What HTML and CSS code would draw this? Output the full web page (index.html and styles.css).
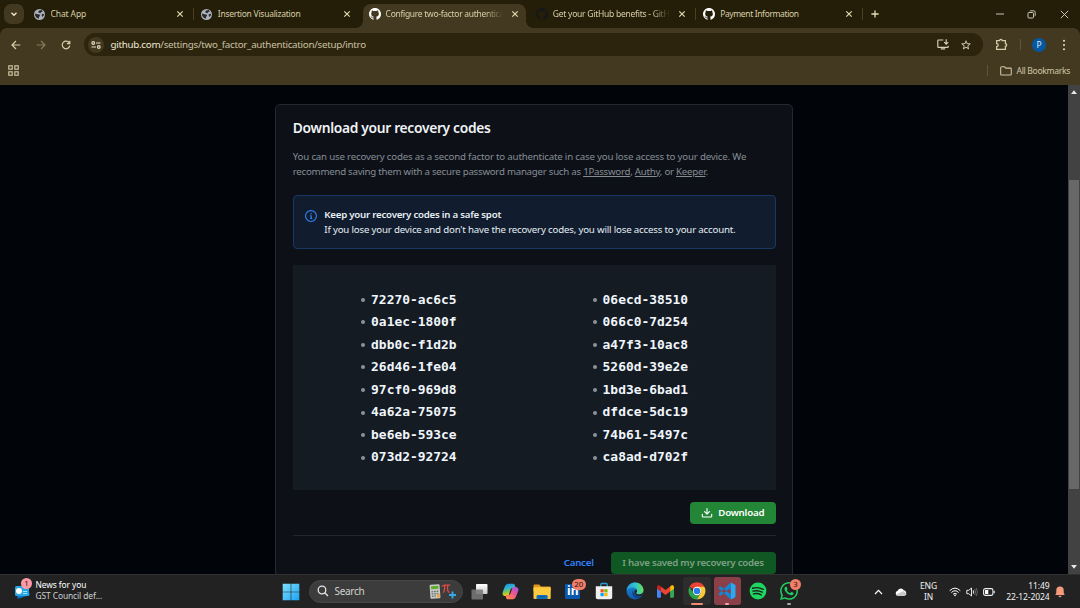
FILE: index.html
```html
<!DOCTYPE html>
<html lang="en">
<head>
<meta charset="utf-8">
<title>Configure two-factor authentication</title>
<link rel="stylesheet" href="styles.css">
</head>
<body>
<svg class="defs" width="0" height="0" aria-hidden="true">
  <defs>
    <symbol id="x" viewBox="0 0 8 8"><path d="M1.3 1.3l5.4 5.4M6.7 1.3L1.3 6.7" fill="none" stroke="currentColor" stroke-width="1.15"/></symbol>
    <symbol id="globe" viewBox="2 2 20 20"><circle cx="12" cy="12" r="10" fill="#a9b1be"/><path fill="#2b2a26" d="M4 10L8.500 11.500l3.500.5 1 2-1.500 2-1 3.500Q5.500 18.500 4 14zM11.500 4.500L16 4l2 3-3 .5-1 2-3-.5-1.500-2zM16 11.500l4-1v3l-2.500 3-1.500-2.500z"/></symbol>
    <symbol id="github" viewBox="0 0 16 16"><path fill="currentColor" d="M8 0C3.58 0 0 3.58 0 8c0 3.54 2.29 6.53 5.47 7.59.4.07.55-.17.55-.38 0-.19-.01-.82-.01-1.49-2.01.37-2.53-.49-2.69-.94-.09-.23-.48-.94-.82-1.13-.28-.15-.68-.52-.01-.53.63-.01 1.08.58 1.23.82.72 1.21 1.87.87 2.33.66.07-.52.28-.87.51-1.07-1.78-.2-3.64-.89-3.64-3.95 0-.87.31-1.59.82-2.15-.08-.2-.36-1.02.08-2.12 0 0 .67-.21 2.2.82.64-.18 1.32-.27 2-.27s1.36.09 2 .27c1.53-1.04 2.2-.82 2.2-.82.44 1.1.16 1.92.08 2.12.51.56.82 1.27.82 2.15 0 3.07-1.87 3.75-3.65 3.95.29.25.54.73.54 1.48 0 1.07-.01 1.93-.01 2.2 0 .21.15.46.55.38A8.01 8.01 0 0 0 16 8c0-4.42-3.58-8-8-8z"/></symbol>
  </defs>
</svg>

<div class="screen">
  <header class="chrome">
    <div class="tabstrip">
      <div class="tab-search"><svg width="8" height="8" viewBox="0 0 8 8"><path d="M1.500 2.700L4 5.200l2.500-2.500" fill="none" stroke="currentColor" stroke-width="1.400"/></svg></div>
      <div class="tabs">
        <div class="tab"><svg class="fav"><use href="#globe"/></svg><span class="tab-title t1">Chat App</span><svg class="close"><use href="#x"/></svg></div>
        <i class="sep"></i>
        <div class="tab"><svg class="fav"><use href="#globe"/></svg><span class="tab-title t2">Insertion Visualization</span><svg class="close"><use href="#x"/></svg></div>
        <i class="sep off"></i>
        <div class="tab active"><svg class="fav gh"><use href="#github"/></svg><span class="tab-title t3 fade">Configure two-factor authentication</span><svg class="close"><use href="#x"/></svg></div>
        <i class="sep off"></i>
        <div class="tab"><svg class="fav gh dark"><use href="#github"/></svg><span class="tab-title t4 fade">Get your GitHub benefits - GitHub</span><svg class="close"><use href="#x"/></svg></div>
        <i class="sep"></i>
        <div class="tab"><svg class="fav gh"><use href="#github"/></svg><span class="tab-title t5">Payment Information</span><svg class="close"><use href="#x"/></svg></div>
        <i class="sep"></i>
      </div>
      <svg class="new-tab" viewBox="0 0 8 8"><path d="M4 .4v7.200M.4 4h7.200" stroke="currentColor" stroke-width="1.300"/></svg>
      <div class="win">
        <svg width="8" height="8" viewBox="0 0 8 8"><path d="M0 4h8" stroke="currentColor" stroke-width=".9"/></svg>
        <svg width="9" height="9" viewBox="0 0 9 9" fill="none" stroke="currentColor" stroke-width=".9"><rect x="1" y="2.500" width="5.500" height="5.500" rx="1"/><path d="M2.800 1.200q.3-.4 1-.4H6.600Q8.200.8 8.200 2.400V5.200q0 .7-.4 1"/></svg>
        <svg width="9" height="9" viewBox="0 0 9 9"><path d="M.8.8l7.400 7.400M8.200.8L.8 8.200" stroke="currentColor" stroke-width=".9"/></svg>
      </div>
    </div>
    <div class="toolbar">
      <div class="nav">
        <svg width="10" height="10" viewBox="0 0 10 10"><path d="M9.300 5H1.300M5 1L1 5l4 4" fill="none" stroke="currentColor" stroke-width="1.200"/></svg>
        <svg class="dim" width="10" height="10" viewBox="0 0 10 10"><path d="M.7 5h8M5 1l4 4-4 4" fill="none" stroke="currentColor" stroke-width="1.200"/></svg>
        <svg width="10" height="10" viewBox="0 0 10 10"><path d="M8.300 3A3.800 3.800 0 1 0 8.800 5.700M8.800.8v2.900H5.900" fill="none" stroke="currentColor" stroke-width="1.200"/></svg>
      </div>
      <div class="omnibox">
        <div class="site"><svg width="10" height="8" viewBox="0 0 10 8" fill="none" stroke="currentColor" stroke-width="1.200"><circle cx="2.200" cy="2" r="1.300"/><path d="M5 2h4.500M.5 6H5"/><circle cx="7.800" cy="6" r="1.300"/></svg></div>
        <div class="url"><b>github.com</b>/settings/two_factor_authentication/setup/intro</div>
        <svg class="install" width="12" height="11" viewBox="0 0 12 11" fill="none" stroke="currentColor" stroke-width="1.150"><path d="M6.300 1H1.500Q.8 1 .8 1.700v6q0 .7.7.7h9q.7 0 .7-.7V6.800M3.800 9.800h4.400M9.200.3v4.600M7.200 3.200l2 2 2-2"/></svg>
        <svg class="star" width="11" height="11" viewBox="0 0 24 24"><path fill="currentColor" d="M22 9.240l-7.190-.62L12 2 9.190 8.630 2 9.240l5.460 4.730L5.820 21 12 17.270 18.180 21l-1.630-7.030L22 9.240zM12 15.400l-3.760 2.270 1-4.280-3.320-2.880 4.380-.38L12 6.100l1.710 4.040 4.380.38-3.320 2.880 1 4.280L12 15.400z"/></svg>
      </div>
      <svg class="puzzle" width="13" height="13" viewBox="0 0 13 13" fill="none" stroke="currentColor" stroke-width="1.250"><path d="M1.600 2.600h3a1.300 1.300 0 0 1 2.600 0h3.200v3a1.300 1.300 0 0 1 0 2.600v3.200H1.600V8.700a1.600 1.600 0 0 0 0-3.200z"/></svg>
      <i class="bar-sep"></i>
      <div class="avatar">P</div>
      <svg class="dots" width="4" height="12" viewBox="0 0 4 12"><g fill="currentColor"><circle cx="2" cy="1.800" r="1.050"/><circle cx="2" cy="6" r="1.050"/><circle cx="2" cy="10.200" r="1.050"/></g></svg>
    </div>
    <div class="bookmarks">
      <svg width="11" height="11" viewBox="0 0 11 11" fill="none" stroke="currentColor" stroke-width="1.150"><rect x=".8" y=".8" width="3.400" height="3.400"/><rect x="6.800" y=".8" width="3.400" height="3.400"/><rect x=".8" y="6.800" width="3.400" height="3.400"/><rect x="6.800" y="6.800" width="3.400" height="3.400"/></svg>
      <i class="bar-sep push"></i>
      <svg class="folder" width="12" height="10" viewBox="0 0 12 10" fill="none" stroke="currentColor" stroke-width="1.050"><path d="M.7 8.200V1.600q0-.8.8-.8h3l1.200 1.300h4.800q.8 0 .8.8v5.300q0 .8-.8.8h-9q-.8 0-.8-.8z"/></svg>
      <span class="all-bm">All Bookmarks</span>
    </div>
  </header>

  <div class="viewport">
    <main class="page">
      <section class="card">
        <h1>Download your recovery codes</h1>
        <p class="lead"><span class="l1">You can use recovery codes as a second factor to authenticate in case you lose access to your device. We</span><br><span class="l2">recommend saving them with a secure password manager such as <a>1Password</a>, <a>Authy</a>, or <a>Keeper</a>.</span></p>
        <div class="flash">
          <svg width="12" height="12" viewBox="0 0 16 16" fill="#3184f4"><path d="M0 8a8 8 0 1 1 16 0A8 8 0 0 1 0 8Zm8-6.500a6.500 6.500 0 1 0 0 13 6.500 6.500 0 0 0 0-13ZM6.500 7.750A.75.75 0 0 1 7.250 7h1a.75.75 0 0 1 .75.75v2.750h.25a.75.75 0 0 1 0 1.500h-2a.75.75 0 0 1 0-1.500h.25v-2h-.25a.75.75 0 0 1-.75-.75ZM8 6a1 1 0 1 1 0-2 1 1 0 0 1 0 2Z"/></svg>
          <div><strong>Keep your recovery codes in a safe spot</strong><p>If you lose your device and don't have the recovery codes, you will lose access to your account.</p></div>
        </div>
        <div class="codes">
          <ul>
            <li>72270-ac6c5</li><li>0a1ec-1800f</li><li>dbb0c-f1d2b</li><li>26d46-1fe04</li><li>97cf0-969d8</li><li>4a62a-75075</li><li>be6eb-593ce</li><li>073d2-92724</li>
          </ul>
          <ul>
            <li>06ecd-38510</li><li>066c0-7d254</li><li>a47f3-10ac8</li><li>5260d-39e2e</li><li>1bd3e-6bad1</li><li>dfdce-5dc19</li><li>74b61-5497c</li><li>ca8ad-d702f</li>
          </ul>
        </div>
        <div class="download-row">
          <button class="btn primary"><svg width="12" height="12" viewBox="0 0 16 16" fill="currentColor"><path d="M2.750 14A1.750 1.750 0 0 1 1 12.250v-2.500a.75.75 0 0 1 1.500 0v2.500c0 .138.112.25.25.25h10.500a.25.25 0 0 0 .25-.25v-2.500a.75.75 0 0 1 1.500 0v2.500A1.750 1.750 0 0 1 13.250 14Z"/><path d="M7.250 7.689V2a.75.75 0 0 1 1.500 0v5.689l1.970-1.969a.749.749 0 1 1 1.060 1.060l-3.250 3.250a.749.749 0 0 1-1.060 0L4.220 6.780a.749.749 0 1 1 1.060-1.060l1.970 1.969Z"/></svg><span>Download</span></button>
        </div>
        <div class="footer">
          <button class="btn link">Cancel</button>
          <button class="btn disabled"><span>I have saved my recovery codes</span></button>
        </div>
      </section>
    </main>
    <div class="scrollbar">
      <svg width="8" height="6" viewBox="0 0 8 6"><path d="M1 5l3-3.800L7 5z" fill="#e8e8e8"/></svg>
      <i class="thumb"></i>
      <svg width="8" height="6" viewBox="0 0 8 6"><path d="M1 1l3 3.800L7 1z" fill="#e8e8e8"/></svg>
    </div>
  </div>

  <footer class="taskbar">
    <div class="widget">
      <div class="news-icon">
        <svg width="17" height="17" viewBox="0 0 17 17"><path d="M2 6l11-2 3 9-11 3.500H3.500z" fill="#0d6fc0"/><rect x="1" y="4" width="14" height="10" rx="1.500" fill="#2aa5e4"/><path d="M9 9h4v1H9zM9 11h4v1H9z" fill="#9be7ff"/><circle cx="5" cy="9" r="3" fill="#fff"/></svg>
        <span class="badge news-badge">1</span>
      </div>
      <div class="news-text"><span class="n1">News for you</span><span class="n2">GST Council def...</span></div>
    </div>
    <div class="start">
      <svg width="18" height="18" viewBox="0 0 18 18"><defs><linearGradient id="win" x2="1" y2="1" gradientUnits="objectBoundingBox"><stop stop-color="#7fe0ff"/><stop offset="1" stop-color="#1ba2f2"/></linearGradient></defs><path fill="url(#win)" d="M.7.7h8v8h-8zM9.300.7h8v8h-8zM.7 9.300h8v8h-8zM9.300 9.300h8v8h-8z"/></svg>
    </div>
    <div class="search">
      <svg width="12" height="12" viewBox="0 0 12 12" fill="none" stroke="#e6e6e6" stroke-width="1.300"><circle cx="5" cy="5" r="3.800"/><path d="M7.800 7.800l3.200 3.200"/></svg>
      <span>Search</span>
      <svg class="doodle" width="28" height="17" viewBox="0 0 28 17"><g transform="rotate(-4 6 8)"><rect x="1" y="1.500" width="10" height="14" rx="1" fill="#c7ccc7"/><rect x="2.300" y="3" width="7.400" height="3" fill="#5fae2b"/><path d="M2.500 8.500h7M2.500 10.800h7M2.500 13.100h4" stroke="#6c7471" stroke-width="1.400" stroke-dasharray="1.700 .8"/><rect x="7.800" y="11" width="2.600" height="3.600" fill="#f2a03a"/></g><path d="M13 3.600q1-1.400 2.300-1.400h6M15.700 2.500q.2 5-1.400 7.200M18.700 2.500q-.7 6.400 1.800 7" fill="none" stroke="#dc4a45" stroke-width="1.300"/><path d="M23.500 8.500v7M20 12h7" stroke="#35a9e8" stroke-width="1.900"/></svg>
    </div>
    <div class="apps">
      <div class="app"><svg width="17" height="17" viewBox="0 0 17 17"><defs><linearGradient id="tv" x2="0" y2="1"><stop stop-color="#fff"/><stop offset="1" stop-color="#c9c9c9"/></linearGradient></defs><rect x="5" y="1" width="11.500" height="10" rx=".8" fill="url(#tv)"/><rect x=".5" y="6.500" width="11.500" height="10" rx=".8" fill="#777" fill-opacity=".88"/></svg></div>
      <div class="app"><svg width="17" height="17" viewBox="0 0 24 24"><defs><linearGradient id="c1" x2=".3" y2="1"><stop stop-color="#1589e9"/><stop offset=".45" stop-color="#30b6cb"/><stop offset=".75" stop-color="#95c93d"/><stop offset="1" stop-color="#ffcb1f"/></linearGradient><linearGradient id="c2" x1="1" x2=".2" y2="1"><stop stop-color="#8e5cf5"/><stop offset=".5" stop-color="#ec5590"/><stop offset="1" stop-color="#ff8a45"/></linearGradient></defs><path d="M16 1H8.500C4.500 1 3.500 7 1.500 11.500-.4 16 1.500 18.500 5 18.500h2.500c2 0 2.400-2.500 3.300-5.500 1-3.500 1.500-6 4.200-6h4C18.500 3.500 18 1 16 1z" fill="url(#c1)"/><path d="M8 23h7.500c4 0 5-6 7-10.500C24.400 8 22.500 5.500 19 5.500h-2.500c-2 0-2.400 2.500-3.300 5.500-1 3.500-1.500 6-4.200 6H5c.5 3.500 1 6 3 6z" fill="url(#c2)"/></svg></div>
      <div class="app"><svg width="18" height="17" viewBox="0 0 18 17"><path d="M.5 2.500q0-1 1-1h4.700l1.800 2h9q.7 0 .7.8V8H.5z" fill="#e0951d"/><rect x=".5" y="4.300" width="17.200" height="11.700" rx=".9" fill="#fccb3e"/><path d="M3.500 16v-2.600q0-1.400 1.400-1.400h8.400q1.400 0 1.400 1.400V16z" fill="#1471bd"/><path d="M5.800 13.800h6.600" stroke="#0b4f91"/></svg></div>
      <div class="app"><span class="linkedin">in</span><span class="badge b20">20</span></div>
      <div class="app"><svg width="18" height="18" viewBox="0 0 18 18"><path d="M5.800 5V2.500q0-1 1-1h4.400q1 0 1 1V5" fill="none" stroke="#2a9ed8" stroke-width="1.300"/><path d="M.8 4.300h16.400v11q0 2-2 2H2.800q-2 0-2-2z" fill="#f0f0f0"/><path d="M5.500 7.200h3.200v3.200H5.500z" fill="#f25022"/><path d="M9.300 7.200h3.200v3.200H9.300z" fill="#7fba00"/><path d="M5.500 11h3.200v3.200H5.500z" fill="#00a4ef"/><path d="M9.300 11h3.200v3.200H9.300z" fill="#ffb900"/></svg></div>
      <div class="app"><svg width="18" height="18" viewBox="0 0 24 24"><defs><linearGradient id="e1" x2="1" y2="0"><stop stop-color="#2299e4"/><stop offset=".5" stop-color="#32c4cf"/><stop offset="1" stop-color="#66e053"/></linearGradient><linearGradient id="e2" x2="0" y2="1"><stop stop-color="#1b8ddb"/><stop offset="1" stop-color="#1259ad"/></linearGradient></defs><circle cx="12" cy="12" r="11.300" fill="url(#e2)"/><path d="M.9 11C1.700 5 6.300.7 12 .7c6.500 0 11.300 4.800 11.300 10 0 3.700-2.600 5.800-5.800 5.800-2.700 0-4-1-4-2 0-.8 1.200-1.200 1.200-3C14.700 9 12.500 7.300 9.500 7.300c-4 0-7.400 2.200-8.600 3.700z" fill="url(#e1)"/><path d="M9.300 10.500c-2.500 4.500.5 10.500 6 11.200 2.500 0 4.700-1.200 6-2.900-3 1-6.300.7-8.700-1.300-2.200-1.900-3.300-4-3.300-7z" fill="#0d3f86"/><path d="M14.700 11.500c0 1.800-1.200 2.200-1.200 3 0 1 1.300 2 4 2 2 0 4-1 5-2.500-.2 1.500-.6 2.900-1.300 4-3 1.300-6.200.8-8.400-1-2-1.700-2.300-4.300-.8-6 1-1 2.300-.8 2.700.5z" fill="#242424"/></svg></div>
      <div class="app"><svg width="17" height="13" viewBox="0 0 24 18"><path d="M0 2.500V16q0 1.700 1.700 1.700h3.800V6.500z" fill="#4285f4"/><path d="M24 2.500V16q0 1.700-1.700 1.700h-3.800V6.500z" fill="#34a853"/><path d="M0 2.500V5l5.500 4V2L3.800.7C2.300-.4 0 .6 0 2.500z" fill="#c5221f"/><path d="M24 2.500V5l-5.500 4V2L20.200.7C21.700-.4 24 .6 24 2.500z" fill="#fbbc04"/><path d="M5.500 2v7l6.500 5 6.500-5V2L12 7z" fill="#ea4335"/></svg></div>
      <div class="app boxed"><svg width="18" height="18" viewBox="0 0 24 24"><path d="M12 12L2.200 6.300A11.300 11.300 0 0 1 21.800 6.300z" fill="#ea4335"/><path d="M12 .7A11.300 11.300 0 0 1 21.800 6.400H12L2.200 6.300A11.300 11.300 0 0 1 12 .7z" fill="#ea4335"/><path d="M2.200 6.300A11.300 11.300 0 0 0 12 23.300L16.900 14.800 12 17.600 7.100 14.800z" fill="#2ba24c"/><path d="M21.800 6.400A11.300 11.300 0 0 1 12 23.300L16.900 14.800 17.600 12 12 6.400z" fill="#fcc934"/><circle cx="12" cy="12" r="5.600" fill="#fff"/><circle cx="12" cy="12" r="4.400" fill="#2a7de9"/></svg><i class="run wide"></i></div>
      <div class="app boxed red"><svg width="18" height="18" viewBox="0 0 24 24"><path d="M17 .8l5.600 2.700q.7.400.7 1.200v14.600q0 .8-.7 1.200L17 23.200z" fill="#29a9f1"/><path d="M17 .8L1 15.400q-.5.600 0 1.200l1.600 1.400q.6.400 1.200 0L17 7.500zM17 23.200L1 8.600Q.5 8 1 7.400L2.600 6q.6-.4 1.200 0L17 16.500z" fill="#1189d6"/></svg><i class="run pink"></i></div>
      <div class="app"><svg width="18" height="18" viewBox="0 0 24 24"><circle cx="12" cy="12" r="11.200" fill="#1ed760"/><path d="M4.700 8.300q7.500-2.100 14.300 1.500M5.300 12.200q6.700-1.800 12.300 1.400M6 15.900q5.400-1.500 10.200 1.300" fill="none" stroke="#202020" stroke-width="1.900" stroke-linecap="round"/></svg></div>
      <div class="app"><svg width="18" height="18" viewBox="0 0 24 24"><path fill="#22d063" d="M17.472 14.382c-.297-.149-1.758-.867-2.030-.967-.273-.099-.471-.148-.67.15-.197.297-.767.966-.94 1.164-.173.199-.347.223-.644.075-.297-.15-1.255-.463-2.390-1.475-.883-.788-1.480-1.761-1.653-2.059-.173-.297-.018-.458.13-.606.134-.133.298-.347.446-.52.149-.174.198-.298.298-.497.099-.198.05-.371-.025-.52-.075-.149-.669-1.612-.916-2.207-.242-.579-.487-.5-.669-.51-.173-.008-.371-.01-.57-.01-.198 0-.52.074-.792.372-.272.297-1.040 1.016-1.040 2.479 0 1.462 1.065 2.875 1.213 3.074.149.198 2.096 3.200 5.077 4.487.709.306 1.262.489 1.694.625.712.227 1.360.195 1.871.118.571-.085 1.758-.719 2.006-1.413.248-.694.248-1.289.173-1.413-.074-.124-.272-.198-.57-.347m-5.421 7.403h-.004a9.870 9.870 0 01-5.031-1.378l-.361-.214-3.741.982.998-3.648-.235-.374a9.860 9.860 0 01-1.510-5.260c.001-5.450 4.436-9.884 9.888-9.884 2.640 0 5.122 1.030 6.988 2.898a9.825 9.825 0 012.893 6.994c-.003 5.450-4.437 9.884-9.885 9.884m8.413-18.297A11.815 11.815 0 0012.050 0C5.495 0 .16 5.335.157 11.892c0 2.096.547 4.142 1.588 5.945L.057 24l6.305-1.654a11.882 11.882 0 005.683 1.448h.005c6.554 0 11.890-5.335 11.893-11.893a11.821 11.821 0 00-3.480-8.413Z"/></svg><span class="badge b3">3</span><i class="run"></i></div>
    </div>
    <div class="tray">
      <svg class="chev" width="9" height="6" viewBox="0 0 9 6"><path d="M1 5l3.500-3.600L8 5" fill="none" stroke="#fff" stroke-width="1.200"/></svg>
      <svg class="cloud" width="12" height="8" viewBox="0 0 12 8"><path d="M3 7.800a2.600 2.600 0 0 1-.4-5.100A3.400 3.400 0 0 1 8.800 2.200 2.900 2.900 0 0 1 9.300 7.800z" fill="#fff"/><path d="M1 6.500L8.500 3 11.700 6Q11 7.800 9.300 7.800H3Q1.500 7.800 1 6.500z" fill="#c9c9c9"/></svg>
      <div class="lang"><span>ENG</span><span>IN</span></div>
      <svg class="wifi" width="12" height="10" viewBox="0 0 12 10" fill="none" stroke="#fff" stroke-width="1"><path d="M.7 3.700Q6-1.500 11.300 3.700M2.400 5.500Q6 2 9.600 5.500M4.100 7.200Q6 5.500 7.900 7.200"/><circle cx="6" cy="8.400" r=".8" fill="#fff" stroke="none"/></svg>
      <svg class="vol" width="12" height="10" viewBox="0 0 12 10" fill="none" stroke="#eee"><path d="M.8 3.300h2L5.500 1v8L2.800 6.700h-2zM7.200 3.400q1 1.600 0 3.200"/><path d="M8.600 2q2 3 0 6M10.200 1q2.400 4 0 8" stroke="#777" stroke-width=".8"/></svg>
      <svg class="batt" width="12" height="8" viewBox="0 0 12 8"><rect x=".6" y=".6" width="9.300" height="6.800" rx="1.600" fill="none" stroke="#eee" stroke-width="1.100"/><rect x="2" y="2" width="3.300" height="4" fill="#fff"/><path d="M11.200 2.700v2.600" stroke="#eee" stroke-width="1.100"/></svg>
      <div class="clock"><span class="time">11:49</span><span class="date">22-12-2024</span></div>
      <svg class="bell" width="10" height="12" viewBox="0 0 10 12"><path d="M5 .5a3.700 3.700 0 0 1 3.700 3.700v2.600l1 2.200H.3l1-2.200V4.200A3.700 3.700 0 0 1 5 .5zM3.500 9.800h3a1.500 1.500 0 0 1-3 0z" fill="#f59a7c"/></svg>
    </div>
  </footer>
</div>
</body>
</html>
```
FILE: styles.css
```css
* { box-sizing: border-box; }
body { margin: 0; font-family: "Noto Sans", "Open Sans", sans-serif; background: #010409; }
svg { display: block; flex: none; }
.defs { position: absolute; }
.screen { width: 1080px; height: 608px; display: flex; flex-direction: column; overflow: hidden; }

/* Browser chrome */
.chrome { height: 85px; flex: none; background: #241d08; color: #d9cfa8; display: flex; flex-direction: column; }
.tabstrip { height: 28px; display: flex; align-items: stretch; }
.tab-search { width: 20px; height: 20px; margin: 4px 4px 0; border-radius: 7px; background: #423920; color: #efe8cc; display: flex; align-items: center; justify-content: center; }
.tabs { display: flex; }
.tab { width: 163.5px; display: flex; align-items: center; padding: 0 7.500px 0 6px; font-size: 8.500px; position: relative; }
.tab.active { background: #423920; margin-top: 4px; padding-bottom: 4px; border-radius: 8px 8px 0 0; }
.tab.active::before, .tab.active::after { content: ""; position: absolute; bottom: 0; width: 7px; height: 7px; }
.tab.active::before { left: -7px; background: radial-gradient(circle at 0 0, transparent 6.600px, #423920 7px); }
.tab.active::after { right: -7px; background: radial-gradient(circle at 100% 0, transparent 6.600px, #423920 7px); }
.fav { width: 11px; height: 11px; margin-right: 5.500px; }
.gh { color: #fff; width: 12px; height: 12px; margin-right: 5px; }
.gh.dark { color: #17171a; }
.tab-title { flex: 1; white-space: nowrap; overflow: hidden; margin-right: 8px; line-height: 12px; }
.t1 { letter-spacing: -.12px; }
.t2 { letter-spacing: -.26px; }
.t3 { letter-spacing: -.3px; }
.t4 { letter-spacing: -.25px; }
.t5 { letter-spacing: -.37px; }
.fade { -webkit-mask-image: linear-gradient(90deg, #000 calc(100% - 18px), transparent); mask-image: linear-gradient(90deg, #000 calc(100% - 18px), transparent); }
.close { width: 8px; height: 8px; color: #e6dcb4; }
.sep { width: 1px; height: 12px; margin: 8px 1.400px; background: #4a4023; }
.sep.off { background: transparent; }
.new-tab { width: 8px; height: 8px; margin: 10px 0 0 7px; color: #e6dcb4; }
.win { display: flex; align-items: center; gap: 23.500px; margin-left: auto; padding-right: 11.500px; color: #ddd8c8; }

.toolbar { height: 33px; background: #423920; border-radius: 7px 7px 0 0; display: flex; align-items: center; padding-left: 10.500px; color: #d6cca6; }
.nav { display: flex; gap: 15.200px; width: 73.500px; }
.dim { opacity: .45; }
.omnibox { width: 899px; height: 23px; border-radius: 12px; background: #2c240d; display: flex; align-items: center; padding: 0 11px 0 4px; }
.site { width: 16px; height: 16px; border-radius: 50%; background: #423920; display: flex; align-items: center; justify-content: center; color: #e6dcc0; }
.url { margin-left: 6.500px; font-size: 9.800px; letter-spacing: -.285px; color: #c9c0a4; }
.url b { font-weight: 400; color: #eee8d8; }
.install { margin-left: auto; color: #d8d0b8; }
.star { margin-left: 11px; width: 12px; height: 12px; color: #e0d8c0; }
.puzzle { margin-left: 12px; }
.bar-sep { width: 1px; height: 11px; background: #5f5533; }
.toolbar .bar-sep { margin-left: 11.500px; }
.avatar { width: 14px; height: 14px; margin-left: 11.500px; border-radius: 50%; background: #0757a0; color: #dcebfa; font-size: 8.500px; line-height: 14px; text-align: center; }
.dots { margin-left: 16px; color: #e6dcb4; }
.bookmarks { flex: 1; background: #423920; display: flex; align-items: center; padding: 0 10px 5px 8px; color: #cfc6a5; }
.push { margin-left: auto; }
.folder { margin: 0 5px 0 12px; }
.all-bm { font-size: 8.600px; line-height: 12px; letter-spacing: -.34px; }

/* Page */
.viewport { flex: 1; min-height: 0; display: flex; background: #010409; }
.page { flex: 1; min-width: 0; overflow: hidden; }
.card { width: 518px; height: 520px; margin: 19px 0 0 275.300px; border: 1px solid #24292f; border-radius: 5px; background: #0d1117; padding: 0 16.500px; }
h1 { margin: 12.500px 0 0; font-size: 13.800px; line-height: 20px; font-weight: 600; letter-spacing: -.31px; color: #f0f3f6; white-space: nowrap; }
.lead { margin: 12.500px 0 0; font-size: 9.700px; line-height: 14.800px; color: #858c95; white-space: nowrap; }
.l1 { letter-spacing: -.19px; }
.l2 { letter-spacing: -.25px; }
.lead a { text-decoration: underline; }
.flash { margin-top: 15.300px; height: 54px; border: 1px solid #183863; border-radius: 4px; background: #111d2e; display: flex; padding: 12px 11px; gap: 7.500px; color: #e6edf3; font-size: 9.700px; line-height: 14.800px; letter-spacing: -.18px; white-space: nowrap; }
.flash svg { margin-top: 2px; }
.flash strong { display: block; font-weight: 600; letter-spacing: -.24px; }
.flash p { margin: 0; }
.codes { margin-top: 16.500px; height: 225px; background: #151b23; display: grid; grid-template-columns: 231.500px 1fr; padding: 23.300px 0 0 68.300px; }
.codes ul { margin: 0; padding: 0; list-style: none; }
.codes li { height: 22.530px; line-height: 22.530px; font: 700 12.920px/22.530px "DejaVu Sans Mono", monospace; color: #f0f6fc; display: flex; align-items: center; white-space: nowrap; }
.codes li::before { content: ""; width: 4px; height: 4px; border-radius: 50%; background: #8b929a; margin-right: 6px; }
.download-row { margin-top: 11.500px; padding-bottom: 11px; border-bottom: 1px solid #21262d; display: flex; justify-content: flex-end; }
.btn { height: 22px; border: 0; border-radius: 4px; padding: 0 12px; font: 600 9.700px/22px "Noto Sans", sans-serif; letter-spacing: -.2px; display: flex; align-items: center; white-space: nowrap; }
.primary { width: 86px; background: #238636; color: #fff; padding: 0 0 0 11px; gap: 5.500px; }
.footer { margin-top: 16.500px; display: flex; justify-content: flex-end; }
.link { background: none; color: #2f81f7; padding: 0; margin-right: 17px; }
.disabled { width: 165px; background: #105823; color: #7f9f86; padding: 0 0 0 11.500px; letter-spacing: -.26px; }
.scrollbar { width: 12px; background: #424242; display: flex; flex-direction: column; align-items: center; padding: 4px 0; }
.thumb { width: 10px; height: 309px; margin: 85px 0 auto; background: #686868; }

/* Taskbar */
.taskbar { height: 34px; flex: none; background: #222; border-top: 1px solid #303030; display: flex; align-items: stretch; color: #fff; }
.widget { width: 277px; display: flex; padding-left: 14px; }
.news-icon { position: relative; margin-top: 7px; width: 17px; height: 17px; }
.badge { position: absolute; border-radius: 6px; height: 11px; min-width: 11px; font-size: 7.800px; line-height: 11px; text-align: center; color: #1d1110; background: #f27e68; }
.news-badge { left: 7px; top: -4px; background: #ff9aa5; }
.news-text { display: flex; flex-direction: column; margin: 4px 0 0 4.500px; font-size: 8.400px; line-height: 11px; letter-spacing: -.08px; white-space: nowrap; }
.n2 { color: #cfcfcf; }
.start { width: 32px; padding: 7.500px 0 0 4.500px; }
.search { width: 154px; height: 23px; margin-top: 4.500px; border-radius: 12px; background: #3c3c3c; border: 1px solid #474747; display: flex; align-items: center; padding-left: 7px; font-size: 10px; letter-spacing: -.3px; color: #d2d2d2; }
.search span { margin-left: 5.500px; }
.doodle { margin-left: auto; margin-right: 5.500px; }
.apps { display: flex; margin-left: 1.500px; }
.app { width: 30.950px; position: relative; display: flex; align-items: center; justify-content: center; padding-bottom: 1px; }
.boxed { width: 27.950px; height: 28px; margin: 2px 1.500px 0; border-radius: 3px; background: #2d2d2d; padding-bottom: 0; }
.boxed.red { background: #8b4049; }
.run { position: absolute; bottom: 3px; left: calc(50% - 2px); width: 4px; height: 2px; border-radius: 1px; background: #a8a8a8; }
.boxed .run { bottom: 0; }
.run.wide { width: 12px; left: calc(50% - 6px); background: #f08a70; }
.run.pink { background: #ffa0a8; }
.linkedin { width: 15px; height: 15px; background: #0a58ad; border-radius: 1px; font-size: 12px; font-weight: 700; line-height: 14px; text-align: center; }
.b20 { left: 14.500px; top: 4px; width: 14px; }
.b3 { left: 16px; top: 4px; }
.tray { margin-left: auto; display: flex; align-items: center; font-size: 8.500px; line-height: 11px; color: #f0f0f0; padding-right: 15px; }
.cloud { margin-left: 12px; }
.lang { width: 20px; margin-left: 11.500px; display: flex; flex-direction: column; align-items: center; padding-bottom: 1px; letter-spacing: -.1px; }
.wifi { margin-left: 10.500px; }
.vol { margin-left: 4.500px; }
.batt { margin-left: 5px; }
.clock { width: 46px; margin-left: 9px; display: flex; flex-direction: column; align-items: flex-end; padding-bottom: 1px; white-space: nowrap; letter-spacing: -.1px; }
.bell { margin-left: 5.500px; }
```
